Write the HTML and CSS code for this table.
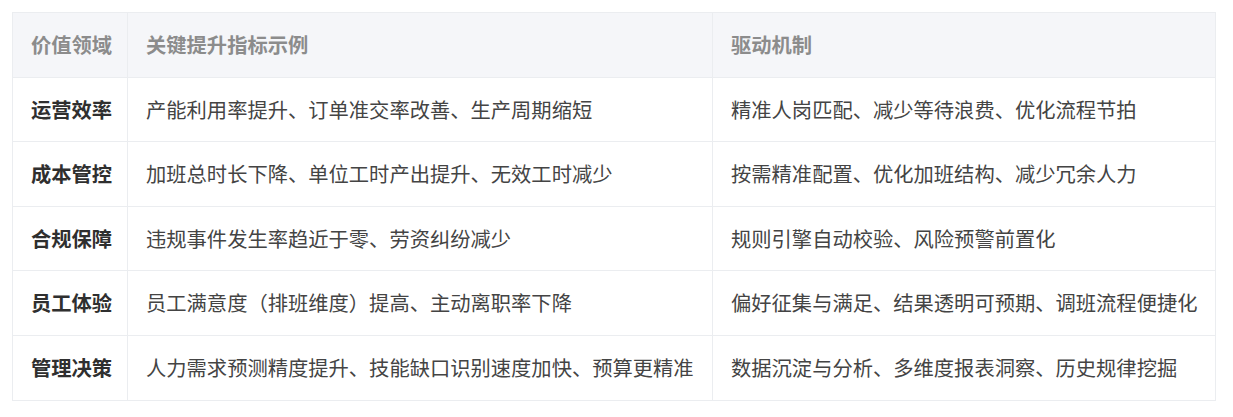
FILE: index.html
```html
<!DOCTYPE html>
<html lang="zh-CN">
<head>
<meta charset="utf-8">
<link rel="stylesheet" href="styles.css">
</head>
<body>
<table class="value-table">
  <colgroup>
    <col class="c-area">
    <col class="c-metric">
    <col class="c-driver">
  </colgroup>
  <thead>
    <tr><th>价值领域</th><th>关键提升指标示例</th><th>驱动机制</th></tr>
  </thead>
  <tbody>
    <tr><td class="area">运营效率</td><td>产能利用率提升、订单准交率改善、生产周期缩短</td><td>精准人岗匹配、减少等待浪费、优化流程节拍</td></tr>
    <tr><td class="area">成本管控</td><td>加班总时长下降、单位工时产出提升、无效工时减少</td><td>按需精准配置、优化加班结构、减少冗余人力</td></tr>
    <tr><td class="area">合规保障</td><td>违规事件发生率趋近于零、劳资纠纷减少</td><td>规则引擎自动校验、风险预警前置化</td></tr>
    <tr><td class="area">员工体验</td><td>员工满意度（排班维度）提高、主动离职率下降</td><td>偏好征集与满足、结果透明可预期、调班流程便捷化</td></tr>
    <tr><td class="area">管理决策</td><td>人力需求预测精度提升、技能缺口识别速度加快、预算更精准</td><td>数据沉淀与分析、多维度报表洞察、历史规律挖掘</td></tr>
  </tbody>
</table>
</body>
</html>
```

FILE: styles.css
```css
html, body {
  margin: 0;
  padding: 0;
  background: #ffffff;
}
body {
  padding: 12px;
  font-family: "Noto Sans CJK SC", "Noto Sans", sans-serif;
}
.value-table {
  border-collapse: collapse;
  table-layout: fixed;
  width: 1204px;
  font-size: 20.3px;
  line-height: 29.6px;
  border: 1px solid #ebedf0;
}
.c-area { width: 115px; }
.c-metric { width: 585px; }
.c-driver { width: auto; }
.value-table th,
.value-table td {
  border: 1px solid #ebedf0;
  padding: 17px 18px;
  text-align: left;
  white-space: nowrap;
}
.value-table th {
  background: #f5f6f9;
  color: #8c8c8c;
  font-weight: 700;
}
.value-table td {
  color: #444444;
  font-weight: 400;
}
.value-table td.area {
  color: #2f2f2f;
  font-weight: 700;
}
```
